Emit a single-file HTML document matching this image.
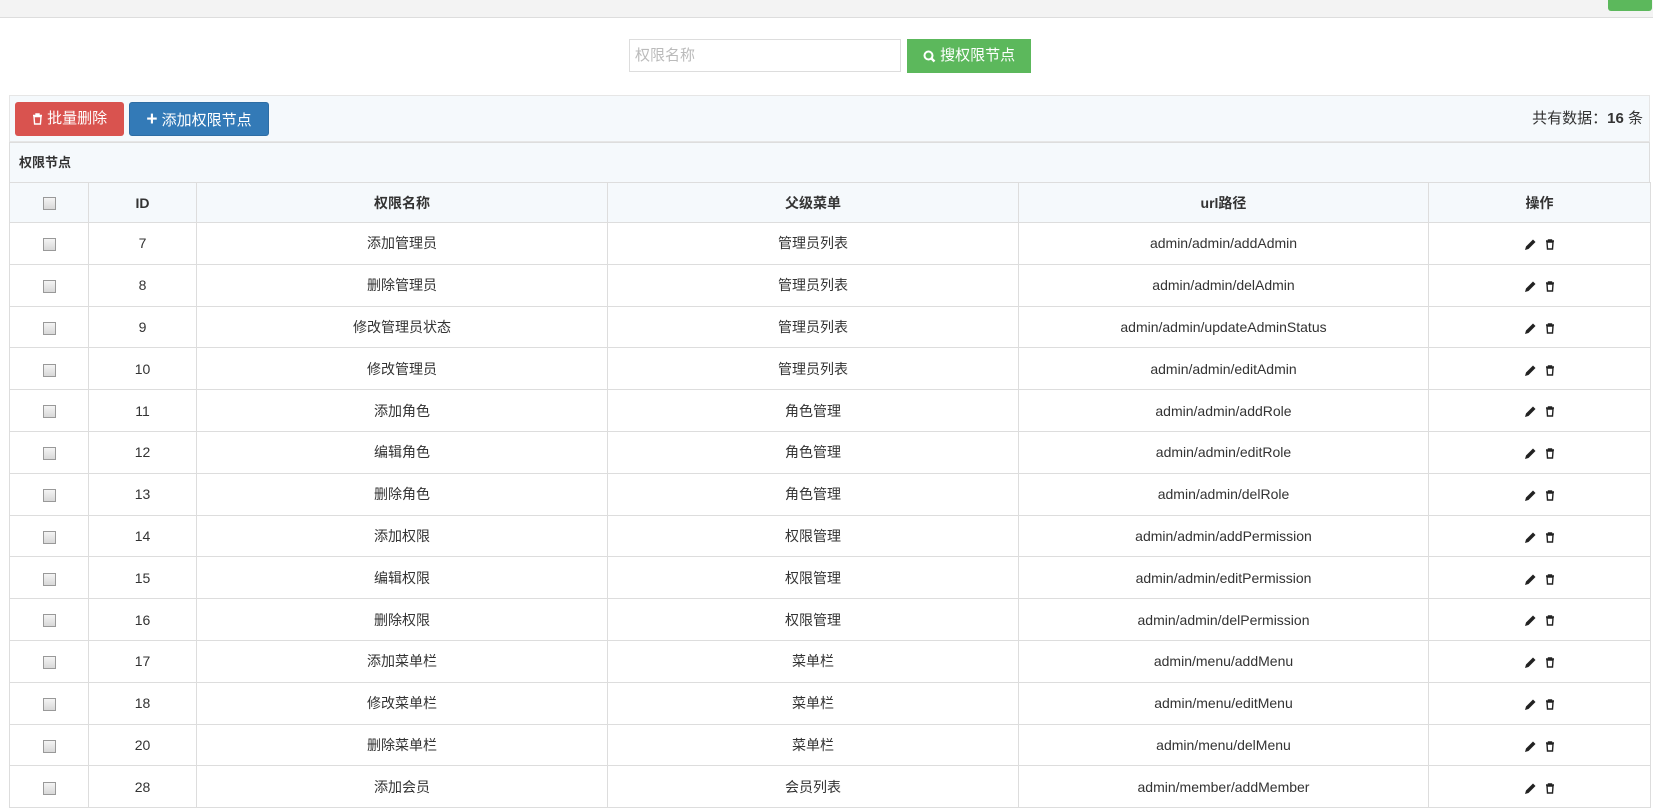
<!DOCTYPE html>
<html><head><meta charset="utf-8"><style>
body{margin:0;width:1653px;height:792px;overflow:hidden;background:#fff;font-family:"Liberation Sans","Noto Sans CJK SC",sans-serif;font-size:14px;color:#333;position:relative}
.top{position:absolute;left:0;top:0;width:1653px;height:17px;background:#f3f3f3;border-bottom:1px solid #ddd}
.gbtn{position:absolute;left:1608px;top:-4px;width:44px;height:15px;background:#5cb85c;border-radius:3px}
.inp{position:absolute;left:629px;top:39px;width:272px;height:33px;border:1px solid #ddd;box-sizing:border-box;color:#bbb;font-size:15px;line-height:31px;padding-left:5px}
.sbtn{position:absolute;left:907px;top:39px;width:124px;height:34px;background:#5cb85c;color:#fff;font-size:15px;line-height:34px;text-align:center}
.bar{position:absolute;left:9px;top:95px;width:1641px;height:47px;background:#f5f9fc;border:1px solid #e6e6e6;box-sizing:border-box}
.b{position:absolute;top:6px;height:34px;line-height:33px;color:#fff;font-size:15px;border-radius:3px;text-align:center;box-sizing:border-box}
.cnt{position:absolute;right:6px;top:11px;font-size:15px}
.ph{position:absolute;left:9px;top:142px;width:1641px;height:41px;background:#f5f9fc;border:1px solid #ddd;box-sizing:border-box;font-weight:bold;font-size:13px;line-height:40px;padding-left:9px}
table{position:absolute;left:9px;top:182px;border-collapse:collapse;width:1641px;table-layout:fixed}
td,th{border:1px solid #ddd;text-align:center;height:40.8px;padding:0;font-size:14px}
th{background:#f5f9fc;height:39px}
.cb{display:inline-block;width:11px;height:11px;border:1px solid #999;background:linear-gradient(#f4f4f4,#d8d8d8);vertical-align:middle}
.ic{display:inline-block;vertical-align:middle}
</style></head><body>
<div class="top"></div><div class="gbtn"></div>
<div class="inp">权限名称</div>
<div class="sbtn"><svg class="ic" width="13" height="13" viewBox="0 0 13 13"><circle cx="5.5" cy="5.5" r="4" stroke="#fff" stroke-width="2" fill="none"/><path d="M8.5 8.5l3 3" stroke="#fff" stroke-width="2.4"/></svg> 搜权限节点</div>
<div class="bar">
<div class="b" style="left:5px;width:109px;background:#d9534f"><svg class="ic" width="11" height="12" viewBox="0 0 11 12"><path d="M1 2.5h9M4 2.5V1h3v1.5M2 3.5h7l-.6 7.5H2.6z" stroke="#fff" stroke-width="1.4" fill="none"/></svg> 批量删除</div>
<div class="b" style="left:119px;width:140px;background:#337ab7;border:1px solid #2e6da4"><b style="font-size:19px">+</b> 添加权限节点</div>
<div class="cnt">共有数据：<b>16</b> 条</div>
</div>
<div class="ph">权限节点</div>
<table>
<colgroup><col style="width:79px"><col style="width:108px"><col style="width:411px"><col style="width:411px"><col style="width:410px"><col style="width:222px"></colgroup>
<tr><th><span class="cb"></span></th><th>ID</th><th>权限名称</th><th>父级菜单</th><th>url路径</th><th>操作</th></tr>
<tbody id="tb"></tbody>
</table>
<script>
var d=[[7,"添加管理员","管理员列表","admin/admin/addAdmin"],[8,"删除管理员","管理员列表","admin/admin/delAdmin"],[9,"修改管理员状态","管理员列表","admin/admin/updateAdminStatus"],[10,"修改管理员","管理员列表","admin/admin/editAdmin"],[11,"添加角色","角色管理","admin/admin/addRole"],[12,"编辑角色","角色管理","admin/admin/editRole"],[13,"删除角色","角色管理","admin/admin/delRole"],[14,"添加权限","权限管理","admin/admin/addPermission"],[15,"编辑权限","权限管理","admin/admin/editPermission"],[16,"删除权限","权限管理","admin/admin/delPermission"],[17,"添加菜单栏","菜单栏","admin/menu/addMenu"],[18,"修改菜单栏","菜单栏","admin/menu/editMenu"],[20,"删除菜单栏","菜单栏","admin/menu/delMenu"],[28,"添加会员","会员列表","admin/member/addMember"]];
var ic='<svg class="ic" width="13" height="13" viewBox="0 0 13 13"><path d="M1 12l1-3.5 7-7 2.5 2.5-7 7z" fill="#222"/></svg> &nbsp;<svg class="ic" width="10" height="11" viewBox="0 0 10 11"><path d="M1 2h8M3.5 2V1h3v1M2 3h6l-.5 7h-5z" stroke="#222" stroke-width="1.4" fill="none"/></svg>';
var h="";d.forEach(function(r){h+='<tr><td><span class="cb"></span></td><td>'+r[0]+'</td><td>'+r[1]+'</td><td>'+r[2]+'</td><td>'+r[3]+'</td><td>'+ic+'</td></tr>'});
document.getElementById("tb").innerHTML=h;
</script>
</body></html>
